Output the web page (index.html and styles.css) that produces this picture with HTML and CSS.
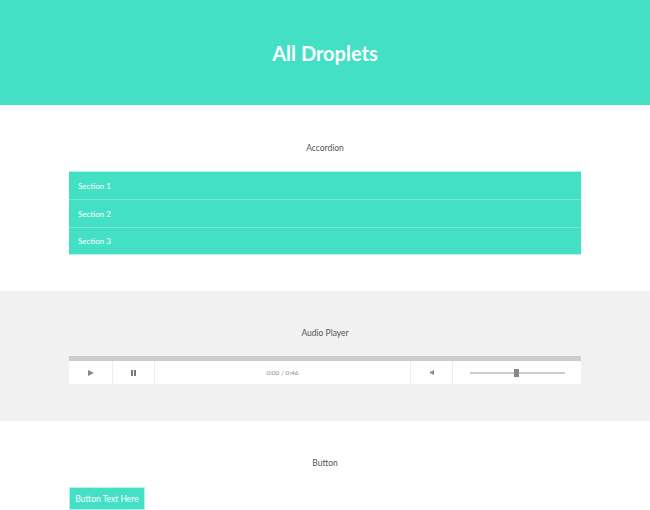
FILE: index.html
```html
<!DOCTYPE html>
<html>
<head>
<meta charset="utf-8">
<link rel="stylesheet" href="styles.css">
</head>
<body>
<header class="hero"><h1>All Droplets</h1></header>

<section class="block first">
  <div class="label">Accordion</div>
  <div class="wrap accordion">
    <div class="acc-row">Section 1</div>
    <div class="acc-row">Section 2</div>
    <div class="acc-row">Section 3</div>
  </div>
</section>

<section class="block grey">
  <div class="label">Audio Player</div>
  <div class="wrap player">
    <div class="progress"></div>
    <div class="controls">
      <div class="cell play"><svg width="6" height="6" viewBox="0 0 6 6"><path d="M0 0L6 3L0 6Z" fill="#888"/></svg></div>
      <div class="cell pause"><svg width="5" height="6" viewBox="0 0 5 6"><rect x="0" y="0" width="2" height="6" fill="#777"/><rect x="3" y="0" width="2" height="6" fill="#777"/></svg></div>
      <div class="cell time">0:00 / 0:46</div>
      <div class="cell mute"><svg width="4" height="5" viewBox="0 0 4 5"><path d="M0 1.5H1.5L4 0V5L1.5 3.5H0Z" fill="#888"/></svg></div>
      <div class="cell volume">
        <div class="track"><div class="thumb"></div></div>
      </div>
    </div>
  </div>
</section>

<section class="block last">
  <div class="label">Button</div>
  <div class="wrap">
    <button class="btn">Button Text Here</button>
  </div>
</section>
</body>
</html>
```

FILE: styles.css
```css
html, body { margin: 0; padding: 0; }
*, *::before, *::after { box-sizing: border-box; }
body {
  font-family: "Lato", "Open Sans", sans-serif;
  background: #fff;
  color: #555;
}
.hero {
  background: #43e0c6;
  height: 105px;
  display: flex;
  align-items: center;
  justify-content: center;
}
.hero h1 {
  margin: 0;
  color: #fff;
  font-size: 20px;
  font-weight: 700;
  line-height: 1;
}
.block.first { padding: 37px 0 36px; }
.block.grey { background: #f1f1f1; padding: 36px 0 37px; }
.block.last { padding: 36px 0 0; }
.label {
  text-align: center;
  font-size: 8.5px;
  line-height: 12px;
  height: 12px;
  color: #555;
  margin-bottom: 17px;
}
.block.last .label { margin-bottom: 18px; }
.wrap {
  margin: 0 69px;
}
.accordion {
  display: flex;
  flex-direction: column;
}
.acc-row {
  background: #43e0c6;
  color: #fff;
  font-size: 8px;
  height: 28px;
  display: flex;
  align-items: center;
  padding-left: 9px;
  border-top: 1px solid #6fe8d4;
}
.acc-row:first-child { border-top: 1px solid #b5f2e8; }
.acc-row:last-child { border-bottom: 1px solid #b5f2e8; }
.player .progress {
  height: 5px;
  background: #cccccc;
}
.controls {
  display: flex;
  height: 23px;
  background: #fff;
}
.cell {
  display: flex;
  align-items: center;
  justify-content: center;
  border-right: 1px solid #eeeeee;
}
.play { width: 44px; }
.pause { width: 42px; }
.time { flex: 1; font-size: 6.5px; color: #888; }
.mute { width: 42px; }
.volume { width: 128px; border-right: none; }
.track {
  position: relative;
  width: 95px;
  height: 2px;
  background: #cccccc;
}
.thumb {
  position: absolute;
  left: 44px;
  top: -3px;
  width: 5px;
  height: 8px;
  background: #888;
}
.btn {
  background: #43e0c6;
  color: #fff;
  border: 1px solid #b5f2e8;
  font-family: inherit;
  font-size: 8.5px;
  width: 76px;
  height: 23px;
  padding: 0;
  display: block;
}
```
